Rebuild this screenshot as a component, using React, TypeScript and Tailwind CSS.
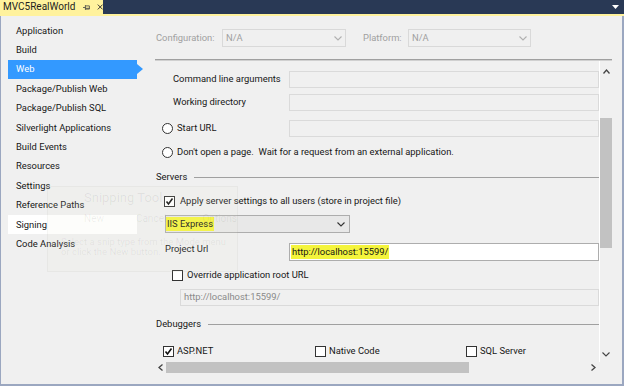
import React from "react";

const F = { fontFamily: 'Roboto, "Noto Sans", sans-serif' };

function Check({ checked }: { checked?: boolean }) {
  return (
    <span className="relative inline-flex h-[11px] w-[11px] shrink-0 items-center justify-center border border-[#333] bg-white">
      {checked && (
        <svg width="9" height="9" viewBox="0 0 9 9">
          <path d="M1.5 4.5 L3.5 7 L7.5 1.5" stroke="#111" strokeWidth="1.6" fill="none" />
        </svg>
      )}
    </span>
  );
}

function Radio() {
  return <span className="inline-block h-[11px] w-[11px] shrink-0 rounded-full border border-[#333] bg-white" />;
}

function Chevron({ color = "#666" }: { color?: string }) {
  return (
    <svg width="8" height="5" viewBox="0 0 8 5">
      <path d="M0.5 0.5 L4 4 L7.5 0.5" stroke={color} strokeWidth="1.1" fill="none" />
    </svg>
  );
}

const nav = [
  "Application",
  "Build",
  "Web",
  "Package/Publish Web",
  "Package/Publish SQL",
  "Silverlight Applications",
  "Build Events",
  "Resources",
  "Settings",
  "Reference Paths",
  "Signing",
  "Code Analysis",
];

export default function App() {
  return (
    <div className="relative flex h-[386px] w-[624px] flex-col overflow-hidden bg-[#f0f0f0] text-[9.4px] text-[#161616]" style={F}>
      {/* Title bar */}
      <div className="flex h-[16px] shrink-0 border-b-2 border-[#fff29d] bg-[#293955]">
        <div className="flex w-[103px] items-center bg-[#fff29d] pl-[3px] text-[10px] leading-none text-[#1e1e1e]">
          <span>MVC5RealWorld</span>
          <svg className="ml-[8px]" width="9" height="7" viewBox="0 0 9 7">
            <path d="M0 3.5 H3 M3 0.5 V6.5 M3 1.5 H8 V5.5 H3 M3 4.5 H8" stroke="#444" strokeWidth="1" fill="none" />
          </svg>
          <svg className="ml-[6px]" width="8" height="8" viewBox="0 0 8 8">
            <path d="M1 1 L7 7 M7 1 L1 7" stroke="#333" strokeWidth="1.2" />
          </svg>
        </div>
        <div className="flex-1" />
        <svg className="mr-[5px] mt-[5px]" width="7" height="4" viewBox="0 0 7 4">
          <path d="M0 0 L7 0 L3.5 4 Z" fill="#ffffff" />
        </svg>
      </div>

      {/* Body */}
      <div className="flex flex-1 border-b-2 border-l border-r-2 border-[#9ba7c0]">
        {/* Left nav */}
        <div className="flex w-[142px] shrink-0 flex-col pt-[5px]">
          {nav.map((n) => {
            const active = n === "Web";
            const sign = n === "Signing";
            return (
              <div key={n} className="relative ml-[7px] flex h-[19.4px] items-center">
                <div
                  className={
                    "flex h-full w-[129px] items-center pl-[8px] " +
                    (active ? "bg-[#3399ff] text-white" : sign ? "bg-white" : "")
                  }
                >
                  {n}
                </div>
                {active && (
                  <span className="h-0 w-0 border-y-[5px] border-l-[6px] border-y-transparent border-l-[#3399ff]" />
                )}
              </div>
            );
          })}
        </div>

        {/* Right column */}
        <div className="flex flex-1 flex-col pl-[12px] pr-[10px]">
          <div className="flex h-[43px] shrink-0 items-center pt-[1px] text-[#a0a0a0]">
            <span className="w-[67px] pl-[1px]">Configuration:</span>
            <div className="flex h-[18px] w-[124px] items-center justify-between border border-[#d9d9d9] pl-[3px] pr-[3px]">
              <span>N/A</span>
              <Chevron color="#b0b0b0" />
            </div>
            <span className="ml-[17px] w-[45px]">Platform:</span>
            <div className="flex h-[18px] w-[123px] items-center justify-between border border-[#d9d9d9] pl-[3px] pr-[3px]">
              <span>N/A</span>
              <Chevron color="#b0b0b0" />
            </div>
          </div>
          <div className="h-[2px] shrink-0 border-t border-b border-t-[#a0a0a0] border-b-[#d0d0d0]" />

          {/* Scroll area */}
          <div className="flex flex-1 flex-col pb-[11px]">
            <div className="flex flex-1">
              <div className="relative flex-1 overflow-hidden border-r border-white">
                <div className="flex flex-col">
                  <div className="mt-[10px] flex h-[17px] items-center">
                    <span className="w-[134px] pl-[18px]">Command line arguments</span>
                    <div className="h-full flex-1 border border-[#dadada]" />
                  </div>
                  <div className="mt-[6px] flex h-[17px] items-center">
                    <span className="w-[134px] pl-[18px]">Working directory</span>
                    <div className="h-full flex-1 border border-[#dadada]" />
                  </div>
                  <div className="mt-[9px] flex h-[17px] items-center">
                    <span className="flex w-[134px] items-center gap-[4px] pl-[7px]">
                      <Radio />
                      Start URL
                    </span>
                    <div className="h-full flex-1 border border-[#dadada]" />
                  </div>
                  <div className="mt-[7px] flex h-[17px] items-center gap-[4px] pl-[7px]">
                    <Radio />
                    <span>Don't open a page.&nbsp; Wait for a request from an external application.</span>
                  </div>
                  <div className="mt-[8px] flex h-[17px] items-center pl-[1px]">
                    <span>Servers</span>
                    <div className="ml-[7px] h-px flex-1 bg-[#a0a0a0]" />
                  </div>
                  <div className="mt-[7px] flex h-[17px] items-center gap-[5px] pl-[9px]">
                    <Check checked />
                    <span>Apply server settings to all users (store in project file)</span>
                  </div>
                  <div className="ml-[10px] mt-[5px] flex h-[18px] w-[185px] items-center justify-between border border-[#adadad] bg-[#e8e8e8] pr-[4px]">
                    <span className="bg-[#f4f43c] px-[1px]">IIS Express</span>
                    <Chevron color="#333" />
                  </div>
                  <div className="mt-[10px] flex h-[18px] items-start">
                    <span className="w-[134px] pl-[10px] leading-[12px]">Project Url</span>
                    <div className="flex h-full flex-1 items-center border border-[#adadad] bg-white pl-[1px]">
                      <span className="bg-[#f4f43c] px-[1px]">http://localhost:15599/</span>
                    </div>
                  </div>
                  <div className="mt-[6px] flex h-[17px] items-center gap-[4px] pl-[17px]">
                    <Check />
                    <span>Override application root URL</span>
                  </div>
                  <div className="ml-[25px] mt-[5px] flex h-[17px] items-center border border-[#dadada] pl-[3px] text-[#8a8a8a]">
                    http://localhost:15599/
                  </div>
                  <div className="mt-[10px] flex h-[17px] items-center pl-[1px]">
                    <span>Debuggers</span>
                    <div className="ml-[7px] h-px flex-1 bg-[#a0a0a0]" />
                  </div>
                  <div className="mt-[10px] flex h-[17px] items-center pl-[8px]">
                    <span className="flex w-[152px] items-center gap-[3px]">
                      <Check checked />
                      ASP.NET
                    </span>
                    <span className="flex w-[151px] items-center gap-[3px]">
                      <Check />
                      Native Code
                    </span>
                    <span className="flex items-center gap-[3px]">
                      <Check />
                      SQL Server
                    </span>
                  </div>
                </div>
              </div>
              {/* vertical scrollbar */}
              <div className="flex w-[12px] flex-col items-center">
                <svg className="mt-[8px]" width="7" height="5" viewBox="0 0 7 5">
                  <path d="M0.5 4.5 L3.5 1 L6.5 4.5" stroke="#444" strokeWidth="1.3" fill="none" />
                </svg>
                <div className="mt-[44px] h-[130px] w-full bg-[#c2c2c2]" />
                <div className="flex-1" />
                <div className="mb-[5px]">
                  <Chevron color="#444" />
                </div>
              </div>
            </div>
            {/* horizontal scrollbar */}
            <div className="flex h-[11px] shrink-0 items-center pr-[12px]">
              <svg className="mx-[3px]" width="5" height="7" viewBox="0 0 5 7">
                <path d="M4.5 0.5 L1 3.5 L4.5 6.5" stroke="#444" strokeWidth="1.3" fill="none" />
              </svg>
              <div className="h-full w-[303px] bg-[#c2c2c2]" />
              <div className="flex-1" />
              <svg className="mr-[4px]" width="5" height="7" viewBox="0 0 5 7">
                <path d="M0.5 0.5 L4 3.5 L0.5 6.5" stroke="#444" strokeWidth="1.3" fill="none" />
              </svg>
            </div>
          </div>
        </div>
      </div>

      {/* Faint ghost of a Snipping Tool window left in the capture */}
      <div className="pointer-events-none absolute left-[47px] top-[186px] flex h-[86px] w-[191px] flex-col border border-black/[0.03] bg-[#e8f0dc]/10 text-black/[0.07]">
        <div className="mt-[2px] pl-[36px] text-[13px] leading-[17px]">Snipping Tool</div>
        <div className="mt-[6px] flex pl-[36px] text-[10px] leading-[14px]">
          <span className="w-[57px]">New</span>
          <span className="w-[73px]">Cancel</span>
          <span>Options</span>
        </div>
        <div className="mt-[11px] pl-[13px] text-[9.5px] leading-[10px]">
          Select a snip type from the Mode menu
          <br />
          or click the New button.
        </div>
      </div>
    </div>
  );
}
